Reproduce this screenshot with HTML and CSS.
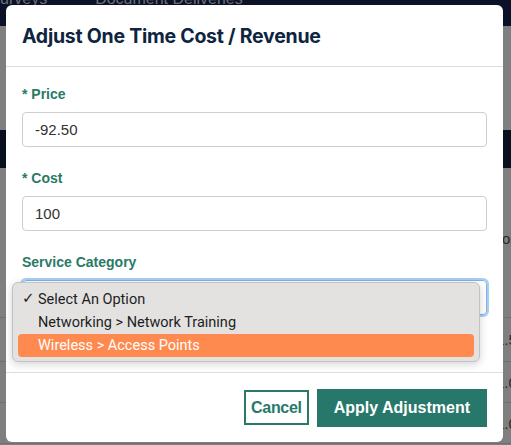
FILE: index.html
```html
<!DOCTYPE html>
<html>
<head>
<meta charset="utf-8">
<link rel="stylesheet" href="styles.css">
</head>
<body>
<div class="page">
  <div class="nav"><span class="nav-item">urveys</span><span class="nav-item">Document Deliveries</span></div>
  <div class="gap-a"></div>
  <div class="thead"></div>
  <div class="row row-a"><span class="edge edge-os">os</span></div>
  <div class="row row-b"><span class="edge">1.5</span></div>
  <div class="row row-c"><span class="edge">1.0</span></div>
  <div class="row row-d"><span class="edge">1.0</span></div>
</div>

<div class="modal">
  <div class="modal-header">
    <h2 class="modal-title">Adjust One Time Cost / Revenue</h2>
  </div>
  <div class="modal-body">
    <div class="field">
      <label class="label">* Price</label>
      <div class="input">-92.50</div>
    </div>
    <div class="field">
      <label class="label">* Cost</label>
      <div class="input">100</div>
    </div>
    <div class="field field-last">
      <label class="label">Service Category</label>
      <div class="select">
        <span class="select-value">Select An Option</span>
        <svg class="chev" width="10" height="10" viewBox="0 0 10 10"><path d="M2 3.5 L5 6.5 L8 3.5" fill="none" stroke="#333" stroke-width="1.4"/></svg>
      </div>
      <div class="popup">
        <div class="opt"><span class="check">✓</span>Select An Option</div>
        <div class="opt">Networking &gt; Network Training</div>
        <div class="opt opt-active">Wireless &gt; Access Points</div>
      </div>
    </div>
  </div>
  <div class="modal-footer">
    <button class="btn btn-outline">Cancel</button>
    <button class="btn btn-primary">Apply Adjustment</button>
  </div>
</div>
</body>
</html>
```
FILE: styles.css
```css
html, body {
  margin: 0;
  padding: 0;
}
body {
  width: 511px;
  height: 445px;
  overflow: hidden;
  background: #7f7f7f;
  font-family: "Liberation Sans", Arial, sans-serif;
}
.page {
  display: flex;
  flex-direction: column;
}
.nav {
  height: 26px;
  background: #0b1227;
  display: flex;
  gap: 48px;
  align-items: flex-start;
  overflow: hidden;
}
.nav-item {
  color: #6b6f7a;
  font-size: 16px;
  line-height: 16px;
  margin-top: -9px;
}
.gap-a { height: 104px; }
.thead { height: 38px; background: #0a0f1d; }
.row {
  border-bottom: 1px solid #6f6f6f;
  padding-left: 504px;
  white-space: nowrap;
  color: #2a2a2a;
  font-size: 15px;
  display: flex;
  align-items: center;
}
.row-a { height: 149px; align-items: flex-start; }
.row-b { height: 43px; }
.row-c { height: 40px; }
.row-d { height: 40px; }
.edge { margin-left: -8px; }
.edge-os { margin-left: -2px; margin-top: 62px; }

.modal {
  position: absolute;
  left: 6px;
  top: 5px;
  width: 497px;
  height: 437px;
  background: #fff;
  border-radius: 6px;
  display: flex;
  flex-direction: column;
}
.modal-header {
  padding: 19px 16px 18px;
  border-bottom: 1px solid #dcdfe2;
}
.modal-title {
  margin: 0;
  font-family: Inter, "Liberation Sans", sans-serif;
  font-weight: 700;
  font-size: 19.5px;
  line-height: 24px;
  color: #0e2440;
  letter-spacing: -0.25px;
}
.modal-body {
  padding: 17px 16px 57px;
  display: flex;
  flex-direction: column;
  gap: 21px;
}
.field {
  display: flex;
  flex-direction: column;
  gap: 8px;
  position: relative;
}
.label {
  font-weight: 700;
  font-size: 14px;
  line-height: 20px;
  color: #2a7a66;
}
.input {
  height: 33px;
  border: 1px solid #c9cfd3;
  border-radius: 4px;
  padding: 0 12px;
  display: flex;
  align-items: center;
  font-size: 15px;
  color: #333;
}
.select {
  height: 33px;
  border: 1px solid #7fb2ea;
  box-shadow: 0 0 0 2px #a9cdf3;
  border-radius: 4px;
  padding: 0 8px 0 12px;
  display: flex;
  align-items: center;
  justify-content: space-between;
  font-size: 15px;
  color: #333;
}
.select-value { visibility: hidden; }
.chev { margin-top: 2px; }
.popup {
  position: absolute;
  left: -10px;
  top: 30px;
  width: 456px;
  padding: 5px 5px 4px;
  background: #e3e2e0;
  border: 1px solid #c3c3c3;
  border-radius: 6px;
  box-shadow: 0 2px 8px rgba(0,0,0,0.18);
  font-family: Roboto, "Liberation Sans", sans-serif;
  font-size: 14.5px;
  color: #1e1e1e;
}
.opt {
  height: 23px;
  line-height: 23px;
  padding-left: 20px;
  border-radius: 4px;
  position: relative;
}
.check {
  position: absolute;
  left: 4px;
  top: -1px;
  font-family: "DejaVu Sans", sans-serif;
  font-size: 15px;
  font-weight: 700;
}
.opt-active {
  background: #ff8a50;
  color: #fff;
}
.modal-footer {
  flex: 1;
  border-top: 1px solid #dcdfe2;
  display: flex;
  justify-content: flex-end;
  align-items: center;
  gap: 8px;
  padding: 0 16px;
}
.btn {
  font-family: "Liberation Sans", Arial, sans-serif;
  font-weight: 700;
  font-size: 16px;
  border-radius: 0;
  cursor: pointer;
}
.btn-outline {
  height: 35px;
  padding: 0 5px;
  background: #fff;
  border: 2px solid #277a68;
  color: #277a68;
  letter-spacing: -0.3px;
}
.btn-primary {
  height: 38px;
  padding: 0 17px;
  background: #27786a;
  border: none;
  color: #fff;
}
```
